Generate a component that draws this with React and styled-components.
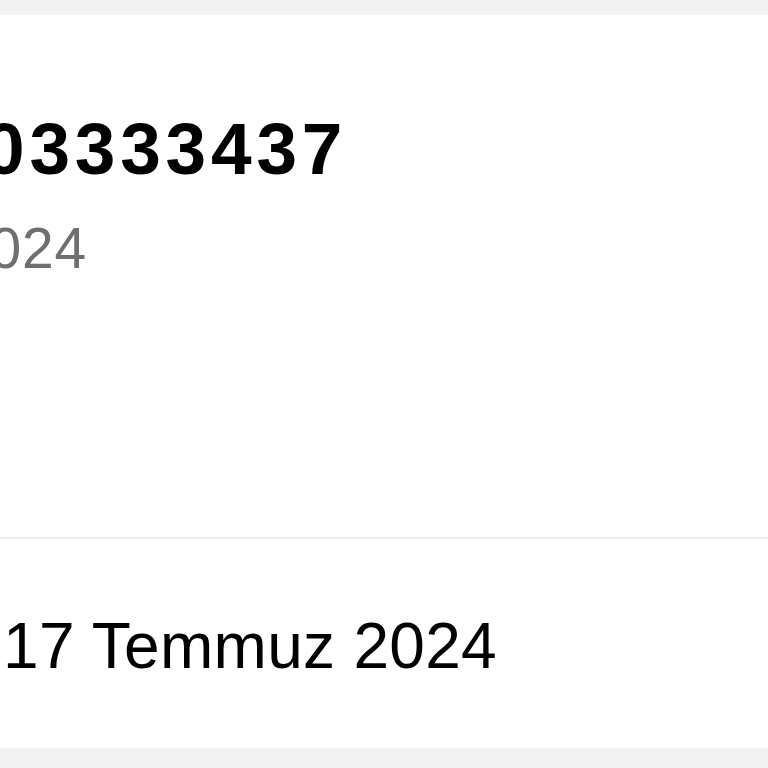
import React from "react";
import styled, { createGlobalStyle } from "styled-components";

const Global = createGlobalStyle`
  html, body { margin: 0; padding: 0; background: #f2f2f2; }
  body { font-family: "Liberation Sans", Arial, sans-serif; overflow: hidden; }
`;

const Page = styled.div`
  width: 768px;
  height: 768px;
  padding-top: 15px;
  box-sizing: border-box;
  overflow: hidden;
  background: #f2f2f2;
`;

const Card = styled.div`
  height: 733px;
  background: #ffffff;
  display: flex;
  flex-direction: column;
`;

const Section = styled.div`
  display: flex;
  flex-direction: column;
  padding: ${(p) => p.$pad};
  height: ${(p) => p.$h};
  box-sizing: border-box;
`;

const Title = styled.div`
  font-size: 73px;
  line-height: 1;
  font-weight: 700;
  letter-spacing: 4.8px;
  color: #000;
  margin-left: -16px;
  white-space: nowrap;
`;

const Sub = styled.div`
  margin-top: 35px;
  font-size: 57px;
  line-height: 1;
  color: #6f6f6f;
  letter-spacing: 0.8px;
  margin-left: -43px;
  white-space: nowrap;
`;

const Divider = styled.div`
  height: 2px;
  background: #ececec;
  flex: none;
`;

const DateText = styled.div`
  font-size: 64px;
  line-height: 1;
  color: #000;
  letter-spacing: 0.3px;
  margin-left: 3px;
  white-space: nowrap;
`;

export default function App() {
  return (
    <>
      <Global />
      <Page>
        <Card>
          <Section $pad="97px 0 0 0" $h="522px">
            <Title>03333437</Title>
            <Sub>2024</Sub>
          </Section>
          <Divider />
          <Section $pad="75px 0 0 0" $h="209px">
            <DateText>17 Temmuz 2024</DateText>
          </Section>
        </Card>
      </Page>
    </>
  );
}
